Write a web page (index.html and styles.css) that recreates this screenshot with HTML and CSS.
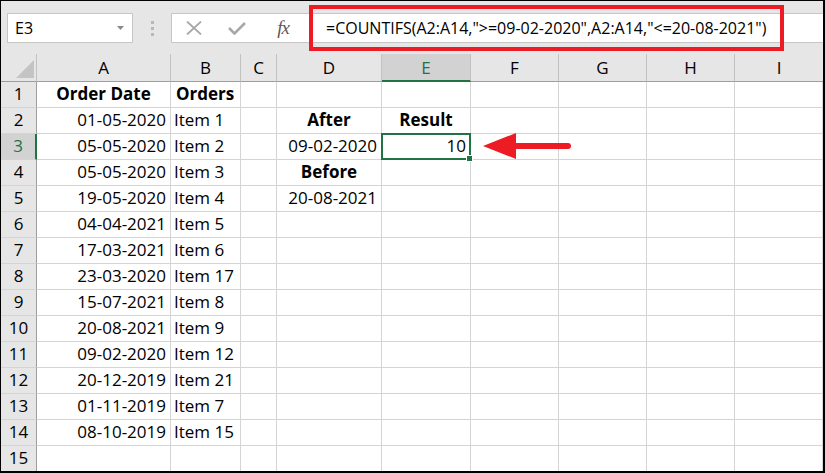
FILE: index.html
```html
<!DOCTYPE html>
<html lang="en">
<head>
    <meta charset="UTF-8">
    <meta name="viewport" content="width=device-width, initial-scale=1.0">
    <title>COUNTIFS between dates</title>
    <link rel="stylesheet" href="styles.css">
</head>
<body>
    <div class="excel">
        <div class="toolbar">
            <div class="namebox">
                <span>E3</span>
                <svg class="drop" width="7" height="4" viewBox="0 0 7 4"><path d="M0 0H7L3.5 4Z" fill="#8a8a8a"/></svg>
            </div>
            <div class="grip"><i></i><i></i><i></i></div>
            <div class="formula">
                <div class="fbtn">
                    <svg width="16" height="14" viewBox="0 0 16 14"><path d="M1 0.5L15 13.5M15 0.5L1 13.5" stroke="#a8a8a8" stroke-width="1.8" fill="none"/></svg>
                </div>
                <div class="fbtn">
                    <svg width="18" height="13" viewBox="0 0 18 13"><path d="M1 6L6.5 11.5L17 1" stroke="#a8a8a8" stroke-width="2.6" fill="none"/></svg>
                </div>
                <div class="fbtn fx">fx</div>
                <div class="ftext">=COUNTIFS(A2:A14,"&gt;=09-02-2020",A2:A14,"&lt;=20-08-2021")</div>
            </div>
        </div>

        <table class="sheet">
            <colgroup>
                <col style="width:36px"><col style="width:134px"><col style="width:70px"><col style="width:36px"><col style="width:105px">
                <col style="width:89px"><col style="width:88px"><col style="width:88px"><col style="width:88px"><col style="width:88px">
            </colgroup>
            <tr class="colhead">
                <th class="corner"><svg width="18" height="18" viewBox="0 0 18 18"><path d="M0 18H18V0Z" fill="#c4c4c4"/></svg></th>
                <th>A</th><th>B</th><th>C</th><th>D</th><th class="sel">E</th><th>F</th><th>G</th><th>H</th><th class="last">I</th>
            </tr>
            <tr><th>1</th><td class="b c">Order Date</td><td class="b c">Orders</td><td></td><td></td><td></td><td></td><td></td><td></td><td></td></tr>
            <tr><th>2</th><td class="r">01-05-2020</td><td>Item 1</td><td></td><td class="b c">After</td><td class="b c">Result</td><td></td><td></td><td></td><td></td></tr>
            <tr><th class="sel">3</th><td class="r">05-05-2020</td><td>Item 2</td><td></td><td class="r">09-02-2020</td><td class="r active">10<span class="handle"></span></td><td></td><td></td><td></td><td></td></tr>
            <tr><th>4</th><td class="r">05-05-2020</td><td>Item 3</td><td></td><td class="b c">Before</td><td></td><td></td><td></td><td></td><td></td></tr>
            <tr><th>5</th><td class="r">19-05-2020</td><td>Item 4</td><td></td><td class="r">20-08-2021</td><td></td><td></td><td></td><td></td><td></td></tr>
            <tr><th>6</th><td class="r">04-04-2021</td><td>Item 5</td><td></td><td></td><td></td><td></td><td></td><td></td><td></td></tr>
            <tr><th>7</th><td class="r">17-03-2021</td><td>Item 6</td><td></td><td></td><td></td><td></td><td></td><td></td><td></td></tr>
            <tr><th>8</th><td class="r">23-03-2020</td><td>Item 17</td><td></td><td></td><td></td><td></td><td></td><td></td><td></td></tr>
            <tr><th>9</th><td class="r">15-07-2021</td><td>Item 8</td><td></td><td></td><td></td><td></td><td></td><td></td><td></td></tr>
            <tr><th>10</th><td class="r">20-08-2021</td><td>Item 9</td><td></td><td></td><td></td><td></td><td></td><td></td><td></td></tr>
            <tr><th>11</th><td class="r">09-02-2020</td><td>Item 12</td><td></td><td></td><td></td><td></td><td></td><td></td><td></td></tr>
            <tr><th>12</th><td class="r">20-12-2019</td><td>Item 21</td><td></td><td></td><td></td><td></td><td></td><td></td><td></td></tr>
            <tr><th>13</th><td class="r">01-11-2019</td><td>Item 7</td><td></td><td></td><td></td><td></td><td></td><td></td><td></td></tr>
            <tr><th>14</th><td class="r">08-10-2019</td><td>Item 15</td><td></td><td></td><td></td><td></td><td></td><td></td><td></td></tr>
            <tr><th>15</th><td></td><td></td><td></td><td></td><td></td><td></td><td></td><td></td><td></td></tr>
        </table>

        <!-- red annotation arrow pointing at E3 -->
        <svg class="arrow" width="92" height="30" viewBox="0 0 92 30">
            <path d="M1 14L34 1V11H86A3 3 0 0 1 86 17H34V27Z" fill="#ed1c24"/>
        </svg>
    </div>
</body>
</html>
```

FILE: styles.css
```css
body{
    margin: 0;
    font-family: "Open Sans", "Liberation Sans", sans-serif;
}

.excel{
    position: relative;
    width: 825px;
    height: 473px;
    box-sizing: border-box;
    border: 1px solid #000;
    border-right-width: 2px;
    border-bottom-width: 2px;
    background-color: #e6e6e6;
    overflow: hidden;
}

/* top bar: name box + formula bar */
.toolbar{
    display: flex;
    align-items: flex-start;
    height: 53px;
    box-sizing: border-box;
    padding-top: 12px;
}

.namebox{
    display: flex;
    align-items: center;
    justify-content: space-between;
    width: 126px;
    height: 30px;
    margin-left: 6px;
    box-sizing: border-box;
    padding: 0 8px 0 7px;
    border: 1px solid #c6c6c6;
    background-color: #fff;
    font-size: 16px;
    color: #000;
}

.grip{
    display: flex;
    flex-direction: column;
    gap: 3px;
    margin: 8px 17px 0 18px;
}

.grip i{
    width: 3px;
    height: 3px;
    background-color: #b8b8b8;
}

.formula{
    flex: 1;
    display: flex;
    align-items: center;
    height: 30px;
    box-sizing: border-box;
    border: 1px solid #c6c6c6;
    border-right: none;
    background-color: #fff;
}

.fbtn{
    display: flex;
    align-items: center;
    justify-content: center;
    width: 44px;
    height: 28px;
}

.fbtn:first-child{
    width: 43px;
}

.fx{
    width: 48px;
    font-family: "Liberation Serif", serif;
    font-style: italic;
    font-size: 19px;
    color: #5a5a5a;
    letter-spacing: -1px;
}

.ftext{
    position: relative;
    flex: 1;
    height: 28px;
    line-height: 28px;
    padding-left: 19px;
    font-size: 16px;
    color: #000;
    white-space: nowrap;
}

.ftext::after{
    content: "";
    position: absolute;
    left: 2px;
    top: -9px;
    width: 475px;
    height: 46px;
    box-sizing: border-box;
    border: 4px solid #ed1c24;
}

/* grid */
.sheet{
    table-layout: fixed;
    width: 822px;
    border-collapse: separate;
    border-spacing: 0;
    background-color: #fff;
    font-size: 17px;
    color: #000;
}

.sheet td, .sheet th{
    box-sizing: border-box;
    height: 26px;
    padding: 0 4px;
    line-height: 23px;
    vertical-align: top;
    white-space: nowrap;
    overflow: visible;
    text-align: left;
    font-weight: normal;
    border-right: 1px solid #d4d4d4;
    border-bottom: 1px solid #d4d4d4;
}

.sheet td:nth-child(3){
    padding-left: 3px;
}

.sheet th{
    background-color: #e6e6e6;
    text-align: center;
    padding: 0;
    border-bottom-color: #d4d4d4;
    border-right-color: #9e9e9e;
}

.colhead th{
    height: 27px;
    line-height: 25px;
    padding-top: 1px;
    border-right-color: #c2c2c2;
    border-bottom-color: #9e9e9e;
}

.colhead th.last{
    border-right: none;
}

.corner{
    text-align: right !important;
    vertical-align: bottom !important;
}

.corner svg{
    display: block;
    margin: 0 2px 3px auto;
}

.sheet th.sel{
    background-color: #d2d2d2;
    color: #217346;
}

.colhead th.sel{
    border-bottom: 2px solid #217346;
}

.sheet tr:not(.colhead) th.sel{
    border-right: 2px solid #217346;
}

.sheet .b{
    font-weight: bold;
}

.sheet .c{
    text-align: center;
}

.sheet .r{
    text-align: right;
}

.sheet .active{
    position: relative;
}

.sheet .active::before{
    content: "";
    position: absolute;
    left: -1px;
    top: -1px;
    right: -1px;
    bottom: -1px;
    border: 2px solid #217346;
}

.handle{
    position: absolute;
    right: -3px;
    bottom: -3px;
    width: 5px;
    height: 5px;
    background-color: #217346;
    border: 1px solid #fff;
    z-index: 2;
}

.arrow{
    position: absolute;
    left: 481px;
    top: 131px;
}
```
